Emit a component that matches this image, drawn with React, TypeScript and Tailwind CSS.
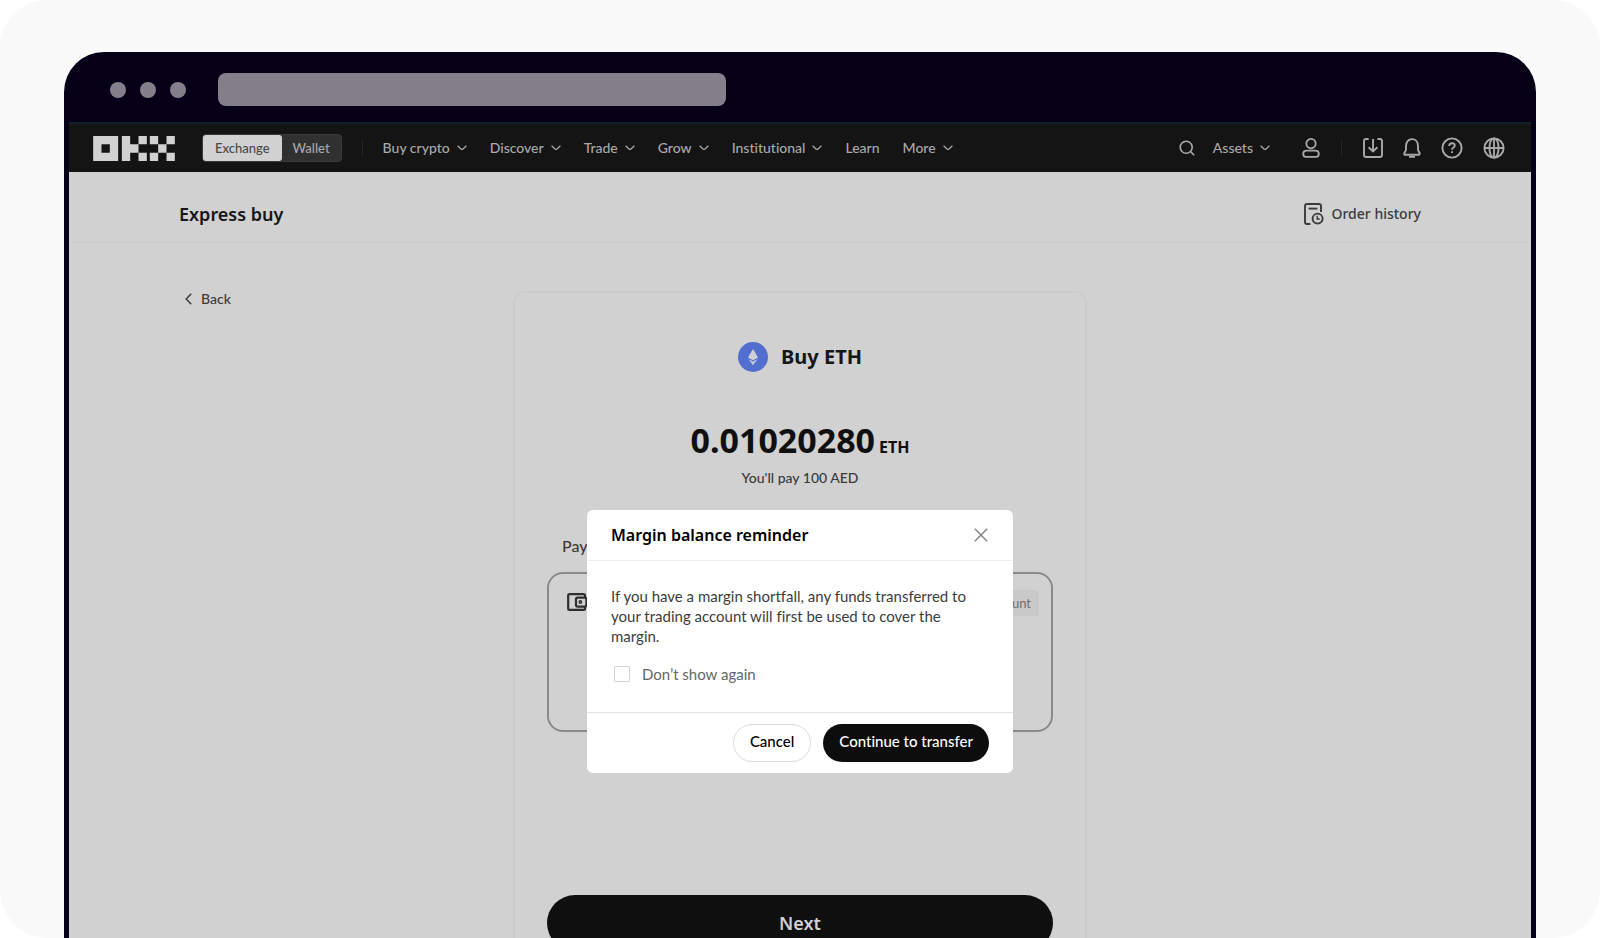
import React, { useState } from "react";

const navItems = [
    { name: "Buy crypto", menu: true },
    { name: "Discover", menu: true },
    { name: "Trade", menu: true },
    { name: "Grow", menu: true },
    { name: "Institutional", menu: true },
    { name: "Learn", menu: false },
    { name: "More", menu: true },
];

function Chevron() {
    return (
        <svg
            width="10"
            height="6"
            viewBox="0 0 10 6"
            fill="none"
            stroke="currentColor"
            strokeWidth="1.3"
        >
            <path d="M0.6 0.8 L4 3.9 Q5 4.7 6 3.9 L9.4 0.8" />
        </svg>
    );
}

function Logo() {
    return (
        <svg width="82" height="25" viewBox="0 0 245 75" fill="#d1d1d1">
            <path fillRule="evenodd" d="M0 0H75V75H0ZM25 25V50H50V25Z" />
            <path d="M86 0H111V25H136V50H111V75H86ZM136 0H161V25H136ZM136 50H161V75H136Z" />
            <path d="M170 0H195V25H170ZM220 0H245V25H220ZM195 25H220V50H195ZM170 50H195V75H170ZM220 50H245V75H220Z" />
        </svg>
    );
}

function SearchIcon() {
    return (
        <svg width="16" height="16" viewBox="0 0 16 16" fill="none" stroke="currentColor" strokeWidth="1.6">
            <circle cx="7.2" cy="7.2" r="6" />
            <path d="M11.5 11.5 L15.2 15.2" />
        </svg>
    );
}

function UserIcon() {
    return (
        <svg width="18" height="20" viewBox="0 0 18 20" fill="none" stroke="currentColor" strokeWidth="1.8">
            <circle cx="9" cy="5.6" r="4.7" />
            <path d="M4.6 12.6H13.4C15.6 12.6 16.8 14 16.8 15.8C16.8 17.8 15.8 18.8 14.4 18.8H3.6C2.2 18.8 1.2 17.8 1.2 15.8C1.2 14 2.4 12.6 4.6 12.6Z" />
        </svg>
    );
}

function DownloadIcon() {
    return (
        <svg width="20" height="20" viewBox="0 0 20 20" fill="none" stroke="currentColor" strokeWidth="1.9">
            <path d="M5.6 1H3.2C1.8 1 1 1.8 1 3V17C1 18.4 1.8 19 3.2 19H16.8C18.2 19 19 18.4 19 17V3C19 1.8 18.2 1 16.8 1H14.4" />
            <path d="M10 1V13.2M5.6 9.2L10 13.4L14.4 9.2" />
        </svg>
    );
}

function BellIcon() {
    return (
        <svg width="18" height="20" viewBox="0 0 18 20" fill="none" stroke="currentColor" strokeWidth="1.9">
            <path d="M3 8C3 4 5.4 1.1 9 1.1C12.6 1.1 15 4 15 8V11.8C15 13 16.8 14.4 16.8 15.8C16.8 16.4 16.4 16.8 15.8 16.8H2.2C1.6 16.8 1.2 16.4 1.2 15.8C1.2 14.4 3 13 3 11.8Z" />
            <path d="M6 18.8H12" />
        </svg>
    );
}

function HelpIcon() {
    return (
        <svg width="22" height="22" viewBox="0 0 22 22" fill="none" stroke="currentColor" strokeWidth="1.9">
            <circle cx="11" cy="11" r="9.6" />
            <path d="M8.2 8.9C8.2 7.2 9.4 6.3 11 6.3C12.7 6.3 13.8 7.2 13.8 8.7C13.8 10.6 11 10.6 11 12.8" />
            <path d="M11 14.3V16.1" />
        </svg>
    );
}

function GlobeIcon() {
    return (
        <svg width="22" height="22" viewBox="0 0 22 22" fill="none" stroke="currentColor" strokeWidth="1.9">
            <circle cx="11" cy="11" r="9.6" />
            <ellipse cx="11" cy="11" rx="4.6" ry="9.6" />
            <path d="M11 1.2V20.8M1.2 11H20.8" />
        </svg>
    );
}

function HistoryIcon() {
    return (
        <svg width="20" height="22" viewBox="0 0 20 22" fill="none" stroke="currentColor" strokeWidth="1.9">
            <path d="M17 9V3C17 1.7 16.2 1 15 1H3C1.8 1 1 1.7 1 3V19C1 20.3 1.8 21 3 21H6.4" />
            <path d="M4.6 5.6H13.4" />
            <circle cx="13.6" cy="15.6" r="5" />
            <path d="M13.2 12.8V16H15.8" strokeWidth="1.4" />
        </svg>
    );
}

function EthIcon() {
    return (
        <svg width="30" height="30" viewBox="0 0 30 30">
            <circle cx="15" cy="15" r="15" fill="#526fd0" />
            <path d="M15 7L20 15.6L15 18.2L10 15.6Z" fill="#d1d1d1" />
            <path d="M10.4 17L15 19.6L19.6 17L15 23.2Z" fill="#c3c9dc" />
        </svg>
    );
}

function WalletIcon() {
    return (
        <svg width="20" height="18" viewBox="0 0 20 18" fill="none" stroke="currentColor" strokeWidth="2.2">
            <path d="M18 4V2.6C18 1.7 17.4 1.2 16.6 1.2H2.6C1.6 1.2 1.2 1.8 1.2 2.6V15.4C1.2 16.2 1.6 16.8 2.6 16.8H16.6C17.4 16.8 18 16.3 18 15.4V14" />
            <rect x="9" y="4.6" width="10.4" height="9" rx="1.6" />
            <circle cx="13.4" cy="9" r="1.2" strokeWidth="1.4" />
        </svg>
    );
}

function ReminderDialog() {
    const [dontShow, setDontShow] = useState(false);

    return (
        <div
            role="dialog"
            aria-labelledby="reminder-title"
            className="w-[426px] rounded-md bg-white"
        >
            <div className="flex h-[51px] items-center justify-between border-b border-[#ededed] px-6">
                <h2 id="reminder-title" className="font-['Noto_Sans',sans-serif] text-base font-semibold text-black">
                    Margin balance reminder
                </h2>
                <button aria-label="Close" className="mr-px text-[#808080]">
                    <svg width="14" height="14" viewBox="0 0 14 14" fill="none" stroke="currentColor" strokeWidth="1.4">
                        <path d="M0.8 0.8L13.2 13.2M13.2 0.8L0.8 13.2" />
                    </svg>
                </button>
            </div>
            <div className="px-6 pt-[25px] pb-[26px]">
                <p className="text-[15px] leading-5 text-[#3d3d3d]">
                    If you have a margin shortfall, any funds transferred to
                    your trading account will first be used to cover the margin.
                </p>
                <label className="mt-4 flex items-center gap-3 pl-[3px] text-[15px] leading-6 text-[#666666]">
                    <input
                        type="checkbox"
                        checked={dontShow}
                        onChange={(e) => setDontShow(e.target.checked)}
                        className="size-4 appearance-none rounded-[1px] border border-[#d4d4d4] bg-white checked:bg-black"
                    />
                    Don’t show again
                </label>
            </div>
            <div className="flex justify-end gap-3 border-t border-[#e4e4e4] px-6 py-[11px] text-[15px] font-medium">
                <button className="h-[38px] rounded-full border border-[#dcdcdc] px-4 pb-1 text-black">
                    Cancel
                </button>
                <button className="h-[38px] rounded-full bg-[#0d0d0d] px-4 pb-1 text-white">
                    Continue to transfer
                </button>
            </div>
        </div>
    );
}

function NavBar() {
    return (
        <header className="flex h-[50px] items-center border-t-2 border-[#12202b] bg-[#141414] pr-[26px] pl-6 text-sm font-medium text-[#a9a9a9]">
            <a href="#" aria-label="OKX">
                <Logo />
            </a>
            <div className="ml-[27px] flex h-7 rounded border border-[#3a3a3a] bg-[#303030] text-[13px]">
                <button className="rounded-[3px] bg-[#d1d1d1] px-3 text-[#484848]">
                    Exchange
                </button>
                <button className="px-[11px]">Wallet</button>
            </div>
            <div className="ml-5 h-4 w-px bg-[#262626]" />
            <nav className="ml-5 flex gap-[23px]">
                {navItems.map((item) => (
                    <a key={item.name} href="#" className="flex items-center gap-[7px]">
                        {item.name}
                        {item.menu && <Chevron />}
                    </a>
                ))}
            </nav>
            <div className="ml-auto flex items-center">
                <button aria-label="Search">
                    <SearchIcon />
                </button>
                <button className="ml-[18px] flex items-center gap-[7px]">
                    Assets
                    <Chevron />
                </button>
                <button aria-label="Account" className="ml-8">
                    <UserIcon />
                </button>
                <div className="mx-[21px] h-4 w-px bg-[#262626]" />
                <div className="flex items-center gap-5">
                    <button aria-label="Download">
                        <DownloadIcon />
                    </button>
                    <button aria-label="Notifications">
                        <BellIcon />
                    </button>
                    <button aria-label="Help">
                        <HelpIcon />
                    </button>
                    <button aria-label="Language">
                        <GlobeIcon />
                    </button>
                </div>
            </div>
        </header>
    );
}

export default function App() {
    return (
        <div className="h-screen bg-white font-['Lato','Noto_Sans',sans-serif] [font-variant-ligatures:none]">
            <div className="h-full overflow-hidden rounded-[48px] bg-[#f9f9f9] px-16 pt-13">
                <div className="flex h-full flex-col rounded-t-[40px] bg-[#050018] px-[5px]">
                    <div className="flex h-[70px] shrink-0 items-center pt-[5px] pl-[41px]">
                        <div className="flex gap-[14px]">
                            <span className="size-4 rounded-full bg-[#84808b]" />
                            <span className="size-4 rounded-full bg-[#84808b]" />
                            <span className="size-4 rounded-full bg-[#84808b]" />
                        </div>
                        <div className="ml-8 h-[33px] w-[508px] rounded-lg bg-[#84808b]" />
                    </div>
                    <div className="relative flex-1 bg-[#d1d1d1]">
                        <NavBar />
                        <div className="flex h-[71px] items-center justify-between border-b border-[#cacaca] px-[110px] pt-[13px]">
                            <h1 className="font-['Noto_Sans',sans-serif] text-lg font-semibold text-[#161616]">
                                Express buy
                            </h1>
                            <a href="#" className="flex items-center gap-2 font-['Noto_Sans',sans-serif] text-sm font-medium text-[#3a3a3a]">
                                <HistoryIcon />
                                Order history
                            </a>
                        </div>
                        <main className="grid grid-cols-[1fr_574px_1fr] pt-12">
                            <div className="-mt-1 pl-[116px]">
                                <a href="#" className="inline-flex items-center gap-[9px] text-sm font-medium text-[#3a3a3a]">
                                    <svg width="7" height="12" viewBox="0 0 7 12" fill="none" stroke="currentColor" strokeWidth="1.5">
                                        <path d="M6.2 0.8L1.2 6L6.2 11.2" />
                                    </svg>
                                    Back
                                </a>
                            </div>
                            <section className="rounded-t-xl border-x-2 border-t-2 border-[#cbcbcb] px-8 pt-[49px]">
                                <div className="flex items-center justify-center gap-[13px]">
                                    <EthIcon />
                                    <h2 className="font-['Noto_Sans',sans-serif] text-xl font-bold text-[#161616]">Buy ETH</h2>
                                </div>
                                <div className="mt-11 flex items-baseline justify-center gap-1 font-['Noto_Sans',sans-serif] leading-12 text-[#101010]">
                                    <span className="text-[34px] font-bold">0.01020280</span>
                                    <span className="text-base font-bold">ETH</span>
                                </div>
                                <p className="mt-1 text-center text-sm font-medium text-[#3a3a3a]">
                                    You'll pay 100 AED
                                </p>
                                <p className="mt-12 pl-[15px] text-base leading-5 font-medium text-[#3a3a3a]">
                                    Pay with
                                </p>
                                <div className="mt-4 flex h-40 items-start justify-between rounded-2xl border-2 border-[#8a8a8a] pt-4 pr-3 pl-[18px] text-[#2e2e2e]">
                                    <span className="pt-[3px]">
                                        <WalletIcon />
                                    </span>
                                    <span className="rounded bg-[#c9c9c9] px-2 py-1 text-[13px] leading-[18px] text-[#6e6e6e]">
                                        Account
                                    </span>
                                </div>
                                <button className="mt-[163px] h-14 w-full rounded-full bg-[#0f0f0f] font-['Noto_Sans',sans-serif] text-lg font-semibold text-[#d1d1d1]">
                                    Next
                                </button>
                            </section>
                        </main>
                        <div className="absolute inset-x-0 top-0 flex justify-center pt-[388px]">
                            <ReminderDialog />
                        </div>
                    </div>
                </div>
            </div>
        </div>
    );
}
